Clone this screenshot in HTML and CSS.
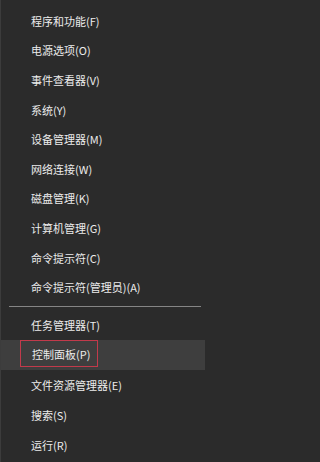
FILE: index.html
```html
<!DOCTYPE html>
<html lang="zh-CN">
<head>
<meta charset="utf-8">
<title>菜单</title>
<link rel="stylesheet" href="styles.css">
</head>
<body>
<nav class="menu">
  <ul class="group group-top">
    <li class="item">程序和功能(F)</li>
    <li class="item">电源选项(O)</li>
    <li class="item">事件查看器(V)</li>
    <li class="item">系统(Y)</li>
    <li class="item">设备管理器(M)</li>
    <li class="item">网络连接(W)</li>
    <li class="item">磁盘管理(K)</li>
    <li class="item">计算机管理(G)</li>
    <li class="item">命令提示符(C)</li>
    <li class="item">命令提示符(管理员)(A)</li>
  </ul>
  <div class="separator"></div>
  <ul class="group group-bottom">
    <li class="item">任务管理器(T)</li>
    <li class="item item-hover"><span class="marked">控制面板(P)</span></li>
    <li class="item">文件资源管理器(E)</li>
    <li class="item">搜索(S)</li>
    <li class="item">运行(R)</li>
  </ul>
</nav>
</body>
</html>
```

FILE: styles.css
```css
html, body {
  margin: 0;
  padding: 0;
  background: #2b2b2b;
  height: 100%;
}

.menu {
  box-sizing: border-box;
  width: 205px;
  height: 462px;
  border-left: 1px solid #3c3c3c;
  padding-top: 6px;
  font-family: "Noto Sans CJK SC", "Noto Sans", sans-serif;
  font-size: 11px;
  color: #ececec;
}

.group {
  list-style: none;
  margin: 0;
  padding: 0;
}

.item {
  display: flex;
  align-items: center;
  padding-left: 30px;
  white-space: nowrap;
}

.group-top .item {
  height: 29.6px;
}

.group-bottom .item {
  height: 30px;
}

.separator {
  height: 1px;
  background: #858585;
  margin: 4px 4px 3px 8px;
}

.item-hover {
  background: #3e3e3e;
  padding-left: 19px;
}

.marked {
  display: inline-flex;
  align-items: center;
  box-sizing: border-box;
  height: 27px;
  margin-top: -2px;
  padding: 0 7px 0 11px;
  border: 1px solid #c23a4b;
}
```
